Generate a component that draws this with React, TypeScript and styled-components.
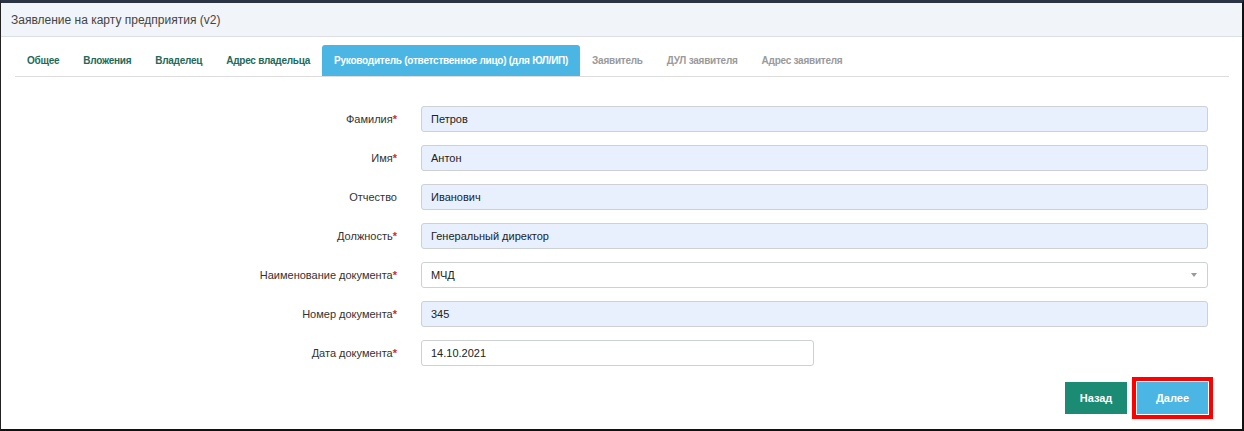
import React from "react"
import styled, { createGlobalStyle } from "styled-components"

const GlobalStyle = createGlobalStyle`
  html, body {
    margin: 0;
    padding: 0;
    background: #fff;
  }
  body {
    font-family: "Liberation Sans", Arial, sans-serif;
    color: #333;
  }
`

const Frame = styled.div`
  box-sizing: border-box;
  width: 1244px;
  height: 431px;
  border-top: 3px solid #2b3344;
  border-left: 1px solid #222;
  border-right: 2px solid #111;
  border-bottom: 2px solid #111;
  display: flex;
  flex-direction: column;
  overflow: hidden;
`

const Header = styled.div`
  height: 33px;
  background: #f1f4f8;
  border-bottom: 1px solid #dcdfe3;
  display: flex;
  align-items: center;
  padding-left: 10px;
  font-size: 12px;
  color: #444;
`

const Body = styled.div`
  padding: 8px 13px 0 14px;
  display: flex;
  flex-direction: column;
`

const TabBar = styled.div`
  display: flex;
  border-bottom: 1px solid #dddddd;
  height: 31px;
`

const Tab = styled.div<{ $active?: boolean; $disabled?: boolean }>`
  padding: 0 12px;
  display: flex;
  align-items: center;
  font-size: 10px;
  font-weight: bold;
  letter-spacing: -0.25px;
  border-radius: 3px 3px 0 0;
  white-space: nowrap;
  background: ${({ $active }) => ($active ? "#4bb6e4" : "transparent")};
  color: ${({ $active, $disabled }) =>
    $active ? "#fff" : $disabled ? "#9a9a9a" : "#22695a"};
`

const Form = styled.div`
  display: grid;
  grid-template-columns: 382px 1fr;
  column-gap: 24px;
  grid-auto-rows: 26px;
  row-gap: 13px;
  padding: 29px 21px 0 0;
`

const Label = styled.label`
  display: flex;
  align-items: center;
  justify-content: flex-end;
  font-size: 11px;
  color: #333;
`

const Required = styled.span`
  color: #c9302c;
  font-weight: bold;
`

const Field = styled.div<{ $filled?: boolean; $width?: string }>`
  box-sizing: border-box;
  height: 26px;
  width: ${({ $width }) => $width || "100%"};
  border: 1px solid #cdd1d6;
  border-radius: 3px;
  background: ${({ $filled }) => ($filled ? "#e8f0fe" : "#fff")};
  display: flex;
  align-items: center;
  justify-content: space-between;
  padding: 0 8px 0 9px;
  font-size: 11px;
  color: #222;
`

const Caret = styled.span`
  width: 0;
  height: 0;
  border-left: 3px solid transparent;
  border-right: 3px solid transparent;
  border-top: 4px solid #999;
  margin-right: 2px;
`

const Actions = styled.div`
  display: flex;
  justify-content: flex-end;
  gap: 10px;
  padding: 16px 21px 0 0;
`

const Button = styled.button<{ $variant: "back" | "next"; $marked?: boolean }>`
  height: 32px;
  border: none;
  border-radius: 0;
  padding: 0;
  width: ${({ $variant }) => ($variant === "back" ? "62px" : "71px")};
  background: ${({ $variant }) => ($variant === "back" ? "#1b8b73" : "#4bb6e4")};
  color: #fff;
  font-family: "Liberation Sans", Arial, sans-serif;
  font-size: 11px;
  font-weight: bold;
  outline: ${({ $marked }) => ($marked ? "4px solid #ff0000" : "none")};
  outline-offset: 1px;
`

const tabs = [
  { title: "Общее" },
  { title: "Вложения" },
  { title: "Владелец" },
  { title: "Адрес владельца" },
  { title: "Руководитель (ответственное лицо) (для ЮЛ/ИП)", active: true },
  { title: "Заявитель", disabled: true },
  { title: "ДУЛ заявителя", disabled: true },
  { title: "Адрес заявителя", disabled: true },
]

const fields = [
  { label: "Фамилия", required: true, value: "Петров", filled: true },
  { label: "Имя", required: true, value: "Антон", filled: true },
  { label: "Отчество", value: "Иванович", filled: true },
  { label: "Должность", required: true, value: "Генеральный директор", filled: true },
  { label: "Наименование документа", required: true, value: "МЧД", select: true },
  { label: "Номер документа", required: true, value: "345", filled: true },
  { label: "Дата документа", required: true, value: "14.10.2021", width: "393px" },
]

const App = () => {
  return (
    <>
      <GlobalStyle />
      <Frame>
        <Header>Заявление на карту предприятия (v2)</Header>
        <Body>
          <TabBar>
            {tabs.map((t) => (
              <Tab key={t.title} $active={t.active} $disabled={t.disabled}>
                {t.title}
              </Tab>
            ))}
          </TabBar>
          <Form>
            {fields.map((f) => (
              <React.Fragment key={f.label}>
                <Label>
                  {f.label}
                  {f.required && <Required>*</Required>}
                </Label>
                <Field $filled={f.filled} $width={f.width}>
                  <span>{f.value}</span>
                  {f.select && <Caret />}
                </Field>
              </React.Fragment>
            ))}
          </Form>
          <Actions>
            <Button $variant="back">Назад</Button>
            <Button $variant="next" $marked>
              Далее
            </Button>
          </Actions>
        </Body>
      </Frame>
    </>
  )
}

export default App
